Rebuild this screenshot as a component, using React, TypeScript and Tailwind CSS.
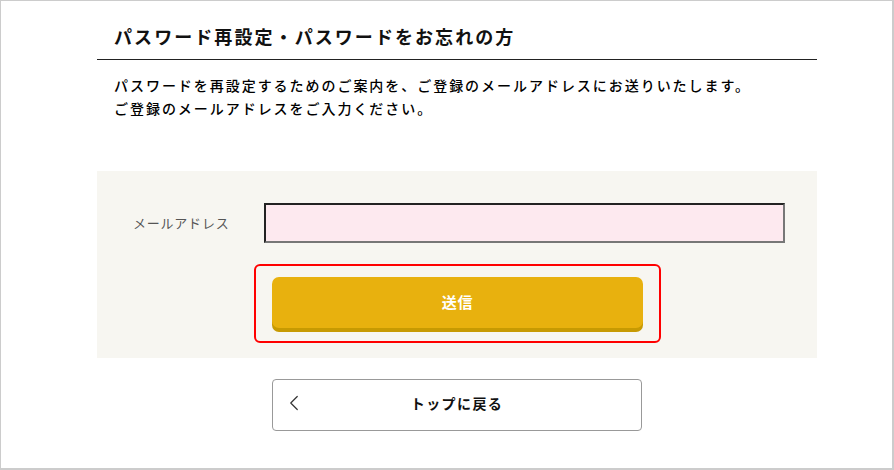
import { ChevronLeft } from 'lucide-react';

const jp = { fontFamily: '"Noto Sans CJK JP", "Noto Sans", sans-serif' };

export default function App() {
    return (
        <div style={jp} className="h-[470px] w-[894px] bg-white border-t border-l border-r-2 border-b-2 border-[#cccccc] text-[#111]">
            <div className="ml-[96px] w-[720px]">
                <h1 className="pt-[21px] pb-[9px] pl-[17px] leading-[28px] text-[18px] font-bold tracking-[0.115em] border-b border-[#222]">
                    パスワード再設定・パスワードをお忘れの方
                </h1>

                <div className="mt-[14px] pl-[17px] text-[14px] leading-[23px] font-medium tracking-[0.14em] text-black">
                    <p>パスワードを再設定するためのご案内を、ご登録のメールアドレスにお送りいたします。</p>
                    <p>ご登録のメールアドレスをご入力ください。</p>
                </div>

                <div className="mt-[51px] h-[187px] bg-[#f7f6f1] pt-[32px]">
                    <div className="flex items-center">
                        <label className="ml-[36px] w-[131px] text-[13px] tracking-[0.06em] text-[#555]">メールアドレス</label>
                        <input
                            type="email"
                            className="h-[40px] w-[521px] bg-[#fde9ef] border-2 border-t-[#222] border-l-[#222] border-b-[#777] border-r-[#777] outline-none"
                        />
                    </div>
                    <div className="ml-[157px] mt-[21px] w-[407px] h-[79px] rounded-[6px] border-2 border-[#ff0000] pl-[16px] pt-[11px]">
                        <button className="h-[51px] w-[371px] rounded-[7px] bg-[#e8b10e] shadow-[0_4px_0_#c79a02] text-white text-[15px] font-bold tracking-[0.05em]">
                            送信
                        </button>
                    </div>
                </div>

                <div className="mt-[21px] ml-[175px] relative flex h-[52px] w-[370px] items-center justify-center rounded-[4px] border border-[#999] bg-white pb-[3px]">
                    <ChevronLeft size={26} strokeWidth={1.1} className="absolute left-[8px] top-[10px] text-[#333]" />
                    <span className="text-[14px] font-bold tracking-[0.1em]">トップに戻る</span>
                </div>
            </div>
        </div>
    );
}
